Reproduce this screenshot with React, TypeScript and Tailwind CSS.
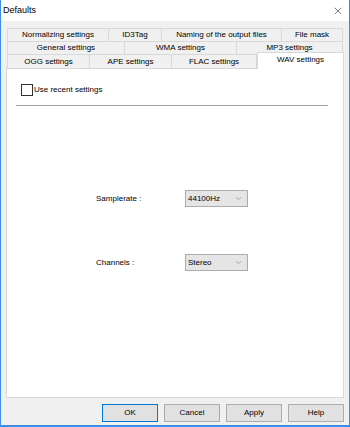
import { X, ChevronDown } from 'lucide-react';

const font = { fontFamily: '"Liberation Sans", Arial, sans-serif' };

type Tab = { label: string; w: number };

const rows: Tab[][] = [
    [
        { label: 'Normalizing settings', w: 102 },
        { label: 'ID3Tag', w: 53 },
        { label: 'Naming of the output files', w: 120 },
        { label: 'File mask', w: 61 },
    ],
    [
        { label: 'General settings', w: 118 },
        { label: 'WMA settings', w: 112 },
        { label: 'MP3 settings', w: 106 },
    ],
];

const TabRow = ({ tabs, h }: { tabs: Tab[]; h: string }) => (
    <div className={`flex ${h}`}>
        {tabs.map((t, i) => (
            <div
                key={t.label}
                style={{ width: t.w }}
                className={`flex items-center justify-center border-t border-r border-[#d9d9d9] bg-[#f0f0f0] text-[8px] text-black ${i === 0 ? 'border-l' : ''}`}
            >
                {t.label}
            </div>
        ))}
    </div>
);

const Combo = ({ value }: { value: string }) => (
    <div className="flex h-[17px] w-[63px] shrink-0 items-center justify-between border border-[#acacac] bg-[#e5e5e5] pl-[2px] pr-[4px] text-[8px] text-black">
        <span>{value}</span>
        <ChevronDown size={9} strokeWidth={1.2} className="text-[#555]" />
    </div>
);

const Button = ({ label, primary }: { label: string; primary?: boolean }) => (
    <div
        className={`flex h-[18px] w-[56px] items-center justify-center border bg-[#e1e1e1] text-[8px] text-black ${primary ? 'border-[#0078d7]' : 'border-[#adadad]'}`}
    >
        {label}
    </div>
);

const Field = ({ label, value, className }: { label: string; value: string; className: string }) => (
    <div className={`flex items-center ${className}`}>
        <span className="ml-[80px] w-[89px] shrink-0 whitespace-nowrap text-[8px] text-black">{label}</span>
        <Combo value={value} />
    </div>
);

export default function App() {
    return (
        <div
            style={font}
            className="flex h-[427px] w-[350px] flex-col overflow-hidden border-x border-b-2 border-[#3d8ee0] bg-[#f0f0f0]"
        >
            {/* title bar */}
            <div className="flex h-[21px] shrink-0 items-center justify-between bg-white pl-[2px] pr-[5px]">
                <span className="text-[9px] text-black">Defaults</span>
                <X size={12} strokeWidth={1} className="text-black" />
            </div>

            <div className="flex flex-1 flex-col pl-[5px] pr-[5px] pt-[7px]">
                {/* tabs */}
                <div className="ml-[1px] flex flex-col">
                    <TabRow tabs={rows[0]} h="h-[13px]" />
                    <TabRow tabs={rows[1]} h="h-[13px]" />
                    <div className="flex h-[14px] items-end">
                        <div className="flex h-[14px] w-[83px] items-center justify-center border-l border-t border-r border-[#d9d9d9] bg-[#f0f0f0] text-[8px]">
                            OGG settings
                        </div>
                        <div className="flex h-[14px] w-[82px] items-center justify-center border-t border-r border-[#d9d9d9] bg-[#f0f0f0] text-[8px]">
                            APE settings
                        </div>
                        <div className="flex h-[14px] w-[85px] items-center justify-center border-t border-r border-[#d9d9d9] bg-[#f0f0f0] text-[8px]">
                            FLAC settings
                        </div>
                        <div className="relative z-10 -mb-[1px] flex h-[17px] w-[87px] items-start justify-center border-x border-t border-[#d9d9d9] bg-white pt-[1px] text-[8px]">
                            WAV settings
                        </div>
                    </div>
                </div>

                {/* panel */}
                <div className="flex h-[330px] flex-col border border-[#d9d9d9] bg-white pl-[9px] pr-[15px] pt-[15px]">
                    <label className="ml-[5px] flex items-center gap-[1px] text-[8px] text-black">
                        <span className="h-[12px] w-[12px] border border-[#333] bg-white" />
                        <span>Use recent settings</span>
                    </label>
                    <div className="mt-[9px] h-[2px] border-t border-[#a0a0a0] border-b-white" />

                    <Field label="Samplerate :" value="44100Hz" className="mt-[83px]" />
                    <Field label="Channels :" value="Stereo" className="mt-[47px]" />
                </div>

                {/* buttons */}
                <div className="mt-[6px] flex justify-end gap-[6px]">
                    <Button label="OK" primary />
                    <Button label="Cancel" />
                    <Button label="Apply" />
                    <Button label="Help" />
                </div>
            </div>
        </div>
    );
}
